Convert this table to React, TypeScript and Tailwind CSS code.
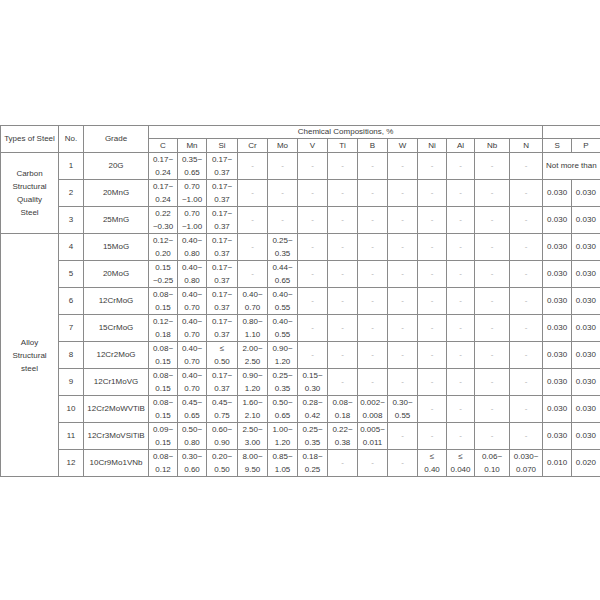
const widths = [58, 25, 65, 29, 29, 31, 30, 30, 30, 30, 30, 30, 29, 28, 35, 33, 29, 28];

const elements = ["C", "Mn", "Si", "Cr", "Mo", "V", "Ti", "B", "W", "Ni", "Al", "Nb", "N"];

type Row = {
  no: number;
  grade: string;
  values: string[];
  s?: string;
  p?: string;
};

const rows: Row[] = [
  { no: 1, grade: "20G", values: ["0.17~|0.24", "0.35~|0.65", "0.17~|0.37", "-", "-", "-", "-", "-", "-", "-", "-", "-", "-"] },
  { no: 2, grade: "20MnG", values: ["0.17~|0.24", "0.70|~1.00", "0.17~|0.37", "-", "-", "-", "-", "-", "-", "-", "-", "-", "-"], s: "0.030", p: "0.030" },
  { no: 3, grade: "25MnG", values: ["0.22|~0.30", "0.70|~1.00", "0.17~|0.37", "-", "-", "-", "-", "-", "-", "-", "-", "-", "-"], s: "0.030", p: "0.030" },
  { no: 4, grade: "15MoG", values: ["0.12~|0.20", "0.40~|0.80", "0.17~|0.37", "-", "0.25~|0.35", "-", "-", "-", "-", "-", "-", "-", "-"], s: "0.030", p: "0.030" },
  { no: 5, grade: "20MoG", values: ["0.15|~0.25", "0.40~|0.80", "0.17~|0.37", "-", "0.44~|0.65", "-", "-", "-", "-", "-", "-", "-", "-"], s: "0.030", p: "0.030" },
  { no: 6, grade: "12CrMoG", values: ["0.08~|0.15", "0.40~|0.70", "0.17~|0.37", "0.40~|0.70", "0.40~|0.55", "-", "-", "-", "-", "-", "-", "-", "-"], s: "0.030", p: "0.030" },
  { no: 7, grade: "15CrMoG", values: ["0.12~|0.18", "0.40~|0.70", "0.17~|0.37", "0.80~|1.10", "0.40~|0.55", "-", "-", "-", "-", "-", "-", "-", "-"], s: "0.030", p: "0.030" },
  { no: 8, grade: "12Cr2MoG", values: ["0.08~|0.15", "0.40~|0.70", "≤|0.50", "2.00~|2.50", "0.90~|1.20", "-", "-", "-", "-", "-", "-", "-", "-"], s: "0.030", p: "0.030" },
  { no: 9, grade: "12Cr1MoVG", values: ["0.08~|0.15", "0.40~|0.70", "0.17~|0.37", "0.90~|1.20", "0.25~|0.35", "0.15~|0.30", "-", "-", "-", "-", "-", "-", "-"], s: "0.030", p: "0.030" },
  { no: 10, grade: "12Cr2MoWVTiB", values: ["0.08~|0.15", "0.45~|0.65", "0.45~|0.75", "1.60~|2.10", "0.50~|0.65", "0.28~|0.42", "0.08~|0.18", "0.002~|0.008", "0.30~|0.55", "-", "-", "-", "-"], s: "0.030", p: "0.030" },
  { no: 11, grade: "12Cr3MoVSiTiB", values: ["0.09~|0.15", "0.50~|0.80", "0.60~|0.90", "2.50~|3.00", "1.00~|1.20", "0.25~|0.35", "0.22~|0.38", "0.005~|0.011", "-", "-", "-", "-", "-"], s: "0.030", p: "0.030" },
  { no: 12, grade: "10Cr9Mo1VNb", values: ["0.08~|0.12", "0.30~|0.60", "0.20~|0.50", "8.00~|9.50", "0.85~|1.05", "0.18~|0.25", "-", "-", "-", "≤|0.40", "≤|0.040", "0.06~|0.10", "0.030~|0.070"], s: "0.010", p: "0.020" },
];

const cell = "border border-[#8a8a8a] p-0 text-center align-middle";

function Value({ text }: { text: string }) {
  if (text === "-") return <span className="text-[#b0b0b0]">-</span>;
  const [a, b] = text.split("|");
  return (
    <div className="flex flex-col items-center leading-[13px]">
      <span>{a}</span>
      <span>{b}</span>
    </div>
  );
}

export default function App() {
  return (
    <div className="min-h-[600px] w-[600px] bg-white pt-[125px] font-['Liberation_Sans',Arial,sans-serif] text-[8px] text-[#3a3a3a]">
      <table className="w-[599px] table-fixed border-collapse border-r-0">
        <colgroup>
          {widths.map((w, i) => (
            <col key={i} style={{ width: w }} />
          ))}
        </colgroup>
        <thead>
          <tr className="h-[13px]">
            <th rowSpan={2} className={`${cell} font-normal`}>
              Types of Steel
            </th>
            <th rowSpan={2} className={`${cell} font-normal`}>
              No.
            </th>
            <th rowSpan={2} className={`${cell} font-normal`}>
              Grade
            </th>
            <th colSpan={13} className={`${cell} font-normal`}>
              Chemical Compositions, %
            </th>
            <th colSpan={2} className={`${cell} border-r-0 font-normal`}></th>
          </tr>
          <tr className="h-[14px]">
            {elements.map((el) => (
              <th key={el} className={`${cell} font-normal`}>
                {el}
              </th>
            ))}
            <th className={`${cell} font-normal`}>S</th>
            <th className={`${cell} border-r-0 font-normal`}>P</th>
          </tr>
        </thead>
        <tbody>
          {rows.map((row, idx) => (
            <tr key={row.no} className={idx % 3 === 2 ? "h-[26px]" : "h-[27px]"}>
              {idx === 0 && (
                <td rowSpan={3} className={cell}>
                  <div className="flex flex-col items-center leading-[13px]">
                    <span>Carbon</span>
                    <span>Structural</span>
                    <span>Quality</span>
                    <span>Steel</span>
                  </div>
                </td>
              )}
              {idx === 3 && (
                <td rowSpan={9} className={cell}>
                  <div className="flex flex-col items-center leading-[13px]">
                    <span>Alloy</span>
                    <span>Structural</span>
                    <span>steel</span>
                  </div>
                </td>
              )}
              <td className={cell}>{row.no}</td>
              <td className={cell}>{row.grade}</td>
              {row.values.map((v, i) => (
                <td key={i} className={cell}>
                  <Value text={v} />
                </td>
              ))}
              {row.s ? (
                <>
                  <td className={cell}>{row.s}</td>
                  <td className={`${cell} border-r-0`}>{row.p}</td>
                </>
              ) : (
                <td colSpan={2} className={`${cell} border-r-0 whitespace-nowrap`}>
                  Not more than
                </td>
              )}
            </tr>
          ))}
        </tbody>
      </table>
    </div>
  );
}
